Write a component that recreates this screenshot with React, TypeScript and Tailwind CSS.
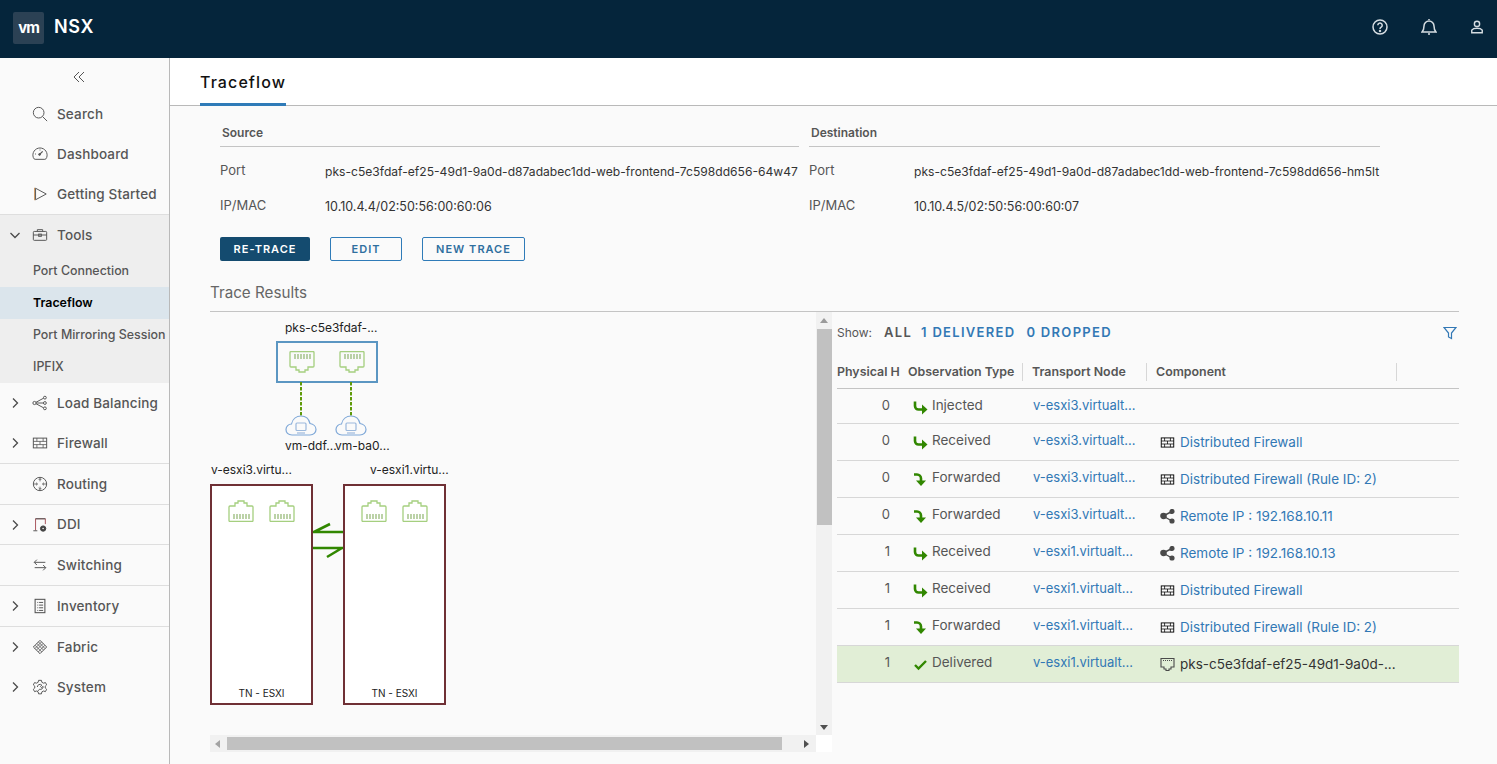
import { ReactNode } from 'react';

const FONT = "font-['Inter','Noto_Sans',sans-serif]";

// ---- icons ----
function Svg({ size = 16, children, className = '' }: { size?: number; children: ReactNode; className?: string }) {
  return (
    <svg width={size} height={size} viewBox="0 0 18 18" fill="none" stroke="currentColor" strokeWidth="1.1" className={className}>
      {children}
    </svg>
  );
}

const SearchIcon = () => (
  <Svg>
    <circle cx="7.5" cy="7.5" r="6" stroke="#565656" />
    <path d="M12 12l5 5" stroke="#565656" />
  </Svg>
);
const DashboardIcon = () => (
  <Svg>
    <path d="M3.5 15h11a2.5 2.5 0 0 0 2-2 8 8 0 1 0-15 0 2.500 2.500 0 0 0 2 2z" />
    <path d="M8 10l4-4" strokeWidth="1.4" />
    <circle cx="8.5" cy="9.500" r="1" fill="currentColor" />
    <path d="M3.5 9h1M9 4v1" />
  </Svg>
);
const PlayIcon = () => (
  <Svg>
    <path d="M3 2v14" stroke="#c98a4a" />
    <path d="M4 2.5L16 9 4 15.5z" />
  </Svg>
);
const ToolsIcon = () => (
  <Svg>
    <rect x="1.5" y="5" width="15" height="10" rx="1" />
    <path d="M6 5V3h6v2M1.5 9h15" />
    <rect x="7.5" y="8" width="3" height="2.5" />
  </Svg>
);
const LoadIcon = () => (
  <Svg>
    <circle cx="2.8" cy="9" r="1.8" />
    <circle cx="14.5" cy="3" r="1.6" />
    <circle cx="14.5" cy="9" r="1.6" />
    <circle cx="14.5" cy="15" r="1.6" />
    <path d="M4.5 8.2L13 3.6M4.6 9H13M4.5 9.8l8.5 4.6" />
  </Svg>
);
const FirewallIcon = ({ size = 16 }: { size?: number }) => (
  <Svg size={size}>
    <rect x="1.5" y="3.500" width="15" height="11" strokeWidth="1.1" />
    <path d="M1.5 7.2h15M1.5 10.8h15M5.5 3.5v3.7M12.5 3.5v3.7M9 7.2v3.6M5.5 10.8v3.7M12.5 10.8v3.7" strokeWidth="0.9" />
  </Svg>
);
const RoutingIcon = () => (
  <Svg>
    <circle cx="9" cy="9" r="7.5" />
    <path d="M2 9h4M12 9h4M9 2v4M9 12v4M4.5 7.5L6.2 9l-1.7 1.5M13.5 7.5L11.8 9l1.7 1.5M7.5 4.5L9 3l1.5 1.5M7.5 13.5L9 15l1.5-1.5" strokeWidth="0.9" />
  </Svg>
);
const DdiIcon = () => (
  <Svg>
    <path d="M4 15V2h11v6" stroke="#a8545c" />
    <path d="M4 2h11M1.5 15.5H6" />
    <circle cx="12.5" cy="13" r="3" fill="#444" stroke="#444" />
    <circle cx="12.5" cy="13" r="0.9" fill="#fafafa" stroke="none" />
  </Svg>
);
const SwitchIcon = () => (
  <Svg>
    <path d="M15 6H2.5M5.5 3L2.5 6l3 3M3 12h12.5M12.5 9l3 3-3 3" />
  </Svg>
);
const InventoryIcon = () => (
  <Svg>
    <rect x="3.5" y="1.5" width="11" height="15" strokeWidth="1.2" />
    <path d="M6 5h1M8 5h4.500M6 8h1M8 8h4.500M6 11h1M8 11h4.500M6 14h1M8 14h4.500" />
  </Svg>
);
const FabricIcon = () => (
  <Svg>
    <path d="M9 1.5L16.5 9 9 16.5 1.5 9z" />
    <path d="M5.5 5L13 12.5M7.2 3.2l7.5 7.6M3.4 7l7.6 7.6M12.5 5L5 12.5M10.8 3.2L3.2 10.8M14.6 7L7 14.6" strokeWidth="0.9" />
  </Svg>
);
const SystemIcon = () => (
  <Svg>
    <path d="M7.4 1.5h3.2l.5 2.2 1.9 1 2.1-.7 1.4 2.6-1.6 1.5v2l1.6 1.5-1.4 2.6-2.1-.7-1.9 1-.5 2.2H7.4l-.5-2.2-1.9-1-2.1.7-1.4-2.6 1.6-1.5v-2L1.500 6.6l1.400-2.6 2.100.7 1.900-1z" />
    <path d="M6 9a3 3 0 0 1 5-2.2L9.5 8.5l1.2 1.2 1.8-1.400a3 3 0 0 1-4 3.200L6.500 13.500" />
  </Svg>
);
const Chevron = ({ down = false }: { down?: boolean }) => (
  <svg width="12" height="12" viewBox="0 0 12 12" fill="none" stroke="#4a4a4a" strokeWidth="1.3">
    {down ? <path d="M1.5 4l4.5 4.5L10.5 4" /> : <path d="M4 1.5L8.5 6 4 10.5" />}
  </svg>
);

// rj45 port, drawn pointing up or down
function Port({ flip = false }: { flip?: boolean }) {
  return (
    <svg width="26" height="22" viewBox="0 0 26 22" fill="none" stroke="#a5cf7f" strokeWidth="1.3" style={flip ? { transform: 'scaleY(-1)' } : undefined}>
      <path d="M1 1.5a1 1 0 0 1 1-1h22a1 1 0 0 1 1 1V15a1 1 0 0 1-1 1h-5v3h-3v2h-6v-2H7v-3H2a1 1 0 0 1-1-1z" />
      <path d="M6 3v5M9 3v5M12 3v5M15 3v5M18 3v5M21 3v5" stroke="#8fb56e" strokeWidth="1.2" />
    </svg>
  );
}

const Cloud = () => (
  <svg width="32" height="21" viewBox="0 0 32 21" fill="none" stroke="#7fa8d8" strokeWidth="1.2">
    <path d="M7 20C3 20 1 17.5 1 14.500C1 11.500 3.500 9 6.500 9C7.500 4 11.500 1 16 1C20.500 1 24 4 25 8.500C28.500 9 31 11.500 31 14.500C31 17.500 28.500 20 25 20Z" fill="#fafafa" />
    <rect x="11" y="8" width="10" height="7.500" rx="1" stroke="#9bb8dc" />
    <path d="M12 18h8" stroke="#9bb8dc" />
  </svg>
);

const Bounce = ({ kind }: { kind: 'in' | 'fw' }) => (
  <svg width="15" height="15" viewBox="0 0 15 15" fill="#318700" stroke="none">
    {kind === 'in' ? (
      <>
        <path d="M2 1.500v4.500a3.500 3.500 0 0 0 3.500 3.500h5" fill="none" stroke="#318700" strokeWidth="2.6" />
        <path d="M9 4.500l5.500 5-5.500 5z" />
      </>
    ) : (
      <>
        <path d="M1 2.500h3a4 4 0 0 1 4 4v4" fill="none" stroke="#318700" strokeWidth="2.6" />
        <path d="M3 8.500h10l-5 5.500z" />
      </>
    )}
  </svg>
);
const Check = () => (
  <svg width="15" height="15" viewBox="0 0 15 15" fill="none" stroke="#318700" strokeWidth="2.4">
    <path d="M2 8l3.5 3.5L13 4" />
  </svg>
);
const ShareIcon = () => (
  <svg width="15" height="15" viewBox="0 0 15 15" fill="#4a4a4a" stroke="#4a4a4a" strokeWidth="1.4">
    <circle cx="3.500" cy="7" r="2.600" />
    <circle cx="12" cy="2.500" r="1.900" />
    <circle cx="12" cy="12" r="1.900" />
    <path d="M3 7l9-4.500M3 7l9 5" />
  </svg>
);
const PortSmall = () => (
  <svg width="15" height="15" viewBox="0 0 15 15" fill="none" stroke="#4a4a4a" strokeWidth="1.1">
    <path d="M1 1.500h13v8.500h-3v2H9v1.500H6V12H4v-2H1z" />
    <path d="M3 3.500h9" strokeDasharray="1 1" />
  </svg>
);

// ---- sidebar ----
type NavItem = { label: string; icon: ReactNode; chevron?: boolean; divider?: boolean; short?: boolean };

const topNav: NavItem[] = [
  { label: 'Search', icon: <SearchIcon /> },
  { label: 'Dashboard', icon: <DashboardIcon /> },
  { label: 'Getting Started', icon: <PlayIcon />, divider: true },
];
const bottomNav: NavItem[] = [
  { label: 'Load Balancing', icon: <LoadIcon />, chevron: true },
  { label: 'Firewall', icon: <FirewallIcon />, chevron: true, divider: true },
  { label: 'Routing', icon: <RoutingIcon />, divider: true },
  { label: 'DDI', icon: <DdiIcon />, chevron: true, divider: true, short: true },
  { label: 'Switching', icon: <SwitchIcon />, divider: true },
  { label: 'Inventory', icon: <InventoryIcon />, chevron: true, divider: true },
  { label: 'Fabric', icon: <FabricIcon />, chevron: true },
  { label: 'System', icon: <SystemIcon />, chevron: true },
];

function NavRow({ item }: { item: NavItem }) {
  const height = item.short ? 'h-10' : item.divider ? 'h-[41px]' : 'h-10';
  return (
    <div className={`flex ${height} items-center ${item.divider ? 'border-b border-[#dedede]' : ''} text-[13.5px] font-medium tracking-[0.15px] text-[#565656]`}>
      <span className="flex w-[32px] justify-end pr-[3px]">
        {item.chevron && <span className="mr-[8px]"><Chevron /></span>}
      </span>
      <span className="flex w-[25px] text-[#565656]">{item.icon}</span>
      <span>{item.label}</span>
    </div>
  );
}

function Sidebar() {
  return (
    <aside className="w-[170px] shrink-0 border-r border-[#b9b9b9] bg-[#fafafa]">
      <div className="flex h-9 items-center justify-center pr-[12px] pt-[2px]">
        <svg width="12" height="12" viewBox="0 0 12 12" fill="none" stroke="#565656" strokeWidth="1">
          <path d="M6 1L1 6l5 5M11 1L6 6l5 5" />
        </svg>
      </div>
      {topNav.map((i) => <NavRow key={i.label} item={i} />)}
      <div className="bg-[#eeeeee] text-[12.4px] font-medium text-[#565656]">
        <div className="flex h-10 items-center text-[13.5px] tracking-[0.15px]">
          <span className="flex w-[32px] justify-start pl-[9px]"><Chevron down /></span>
          <span className="flex w-[25px]"><ToolsIcon /></span>
          <span>Tools</span>
        </div>
        <div className="flex h-8 items-center pl-[33px]">Port Connection</div>
        <div className="flex h-8 items-center bg-[#dbe5ec] pl-[33px] font-semibold text-black">Traceflow</div>
        <div className="flex h-8 items-center whitespace-nowrap pl-[33px]">Port Mirroring Session</div>
        <div className="flex h-8 items-center pl-[33px]">IPFIX</div>
      </div>
      {bottomNav.map((i) => <NavRow key={i.label} item={i} />)}
    </aside>
  );
}

// ---- source / destination ----
function Endpoint({ title, port, ip, className }: { title: string; port: string; ip: string; className: string }) {
  return (
    <div className={className}>
      <div className="flex h-[29px] items-center border-b border-[#c4c4c4] pl-[2px] pt-[1px] text-[12px] font-semibold text-[#565656]">{title}</div>
      <div className="mt-[15px] flex h-[20px] items-center text-[13px] text-[#565656]">
        <span className="-mt-[2px] w-[105px] shrink-0">Port</span>
        <span className="whitespace-nowrap text-[12.1px] text-[#333]">{port}</span>
      </div>
      <div className="mt-[15px] flex h-[20px] items-center text-[13px] text-[#565656]">
        <span className="-mt-[2px] w-[105px] shrink-0">IP/MAC</span>
        <span className="whitespace-nowrap text-[12.5px] text-[#333]">{ip}</span>
      </div>
    </div>
  );
}

// ---- topology canvas ----
function Topology() {
  return (
    <div className="relative h-[423px] flex-1 overflow-hidden text-[12px] text-[#222]">
      <span className="absolute left-[75px] top-[7px]">pks-c5e3fdaf-...</span>
      <div className="absolute left-[66px] top-[29px] flex h-[42px] w-[102px] items-center justify-between border-2 border-[#5b96c2] bg-[#fafafa] px-[11px]">
        <Port />
        <Port />
      </div>
      <svg className="absolute left-[66px] top-[70px]" width="102" height="34" fill="none" stroke="#5f9a0a" strokeWidth="2" strokeDasharray="3.5 1.5">
        <path d="M25 0v34M75 0v34" />
      </svg>
      <span className="absolute left-[75px] top-[103px]"><Cloud /></span>
      <span className="absolute left-[125px] top-[103px]"><Cloud /></span>
      <span className="absolute left-[75px] top-[125px]">vm-ddf...</span>
      <span className="absolute left-[125px] top-[125px]">vm-ba0...</span>

      <span className="absolute left-[1px] top-[149px]">v-esxi3.virtu...</span>
      <span className="absolute left-[160px] top-[149px]">v-esxi1.virtu...</span>
      <div className="absolute left-0 top-[172px] h-[221px] w-[103px] border-2 border-[#6f3035] bg-white">
        <div className="flex justify-between px-[16px] pt-[14px]"><Port flip /><Port flip /></div>
        <span className="absolute bottom-[2px] left-0 w-full text-center text-[10px]">TN - ESXI</span>
      </div>
      <div className="absolute left-[133px] top-[172px] h-[221px] w-[103px] border-2 border-[#6f3035] bg-white">
        <div className="flex justify-between px-[16px] pt-[14px]"><Port flip /><Port flip /></div>
        <span className="absolute bottom-[2px] left-0 w-full text-center text-[10px]">TN - ESXI</span>
      </div>
      <svg className="absolute left-[103px] top-[207px]" width="30" height="40" fill="none" stroke="#318700" strokeWidth="2.6">
        <path d="M0 13h30M1 13l16-8" />
        <path d="M0 29h30M29 29L14 38" />
      </svg>
    </div>
  );
}

function VerticalBar() {
  return (
    <div className="flex h-[423px] w-[16px] shrink-0 flex-col items-center justify-between bg-[#f1f1f1]">
      <div className="flex h-[17px] items-center"><span className="h-0 w-0 border-x-[4px] border-b-[5px] border-x-transparent border-b-[#9a9a9a]" /></div>
      <div className="mb-auto h-[196px] w-[15px] bg-[#c1c1c1]" />
      <div className="flex h-[16px] items-center"><span className="h-0 w-0 border-x-[4px] border-t-[5px] border-x-transparent border-t-[#505050]" /></div>
    </div>
  );
}

function HorizontalBar() {
  return (
    <div className="flex h-[17px]">
      <div className="flex h-full w-[606px] items-center bg-[#f1f1f1]">
        <span className="ml-[5px] h-0 w-0 border-y-[4px] border-r-[5px] border-y-transparent border-r-[#a3a3a3]" />
        <div className="ml-[7px] h-[13px] w-[555px] bg-[#c1c1c1]" />
        <span className="ml-[22px] h-0 w-0 border-y-[4px] border-l-[5px] border-y-transparent border-l-[#505050]" />
      </div>
      <div className="w-[16px] bg-white" />
    </div>
  );
}

// ---- results table ----
type Row = { hop: number; obs: string; kind: 'in' | 'fw' | 'ok'; node: string; comp?: string; icon?: 'fw' | 'share' | 'port'; first?: boolean };

const rows: Row[] = [
  { hop: 0, obs: 'Injected', kind: 'in', node: 'v-esxi3.virtualt...', first: true },
  { hop: 0, obs: 'Received', kind: 'in', node: 'v-esxi3.virtualt...', comp: 'Distributed Firewall', icon: 'fw' },
  { hop: 0, obs: 'Forwarded', kind: 'fw', node: 'v-esxi3.virtualt...', comp: 'Distributed Firewall (Rule ID: 2)', icon: 'fw' },
  { hop: 0, obs: 'Forwarded', kind: 'fw', node: 'v-esxi3.virtualt...', comp: 'Remote IP : 192.168.10.11', icon: 'share' },
  { hop: 1, obs: 'Received', kind: 'in', node: 'v-esxi1.virtualt...', comp: 'Remote IP : 192.168.10.13', icon: 'share' },
  { hop: 1, obs: 'Received', kind: 'in', node: 'v-esxi1.virtualt...', comp: 'Distributed Firewall', icon: 'fw' },
  { hop: 1, obs: 'Forwarded', kind: 'fw', node: 'v-esxi1.virtualt...', comp: 'Distributed Firewall (Rule ID: 2)', icon: 'fw' },
  { hop: 1, obs: 'Delivered', kind: 'ok', node: 'v-esxi1.virtualt...', comp: 'pks-c5e3fdaf-ef25-49d1-9a0d-...', icon: 'port' },
];

const cols = 'grid grid-cols-[71px_124px_124px_1fr]';

function ResultRow({ row }: { row: Row }) {
  const ok = row.kind === 'ok';
  return (
    <div className={`${cols} ${row.first ? 'h-[35px]' : 'h-[37px]'} items-start border-b border-[#d7d7d7] pt-[7px] text-[13px] ${ok ? 'bg-[#e1eed6]' : ''}`}>
      <span className="pr-[18px] text-right text-[#565656]">{row.hop}</span>
      <span className="-mt-[1px] flex items-center gap-[4px] pl-[5px] text-[13.5px] text-[#565656]">
        <span className="translate-y-[2px]">{ok ? <Check /> : <Bounce kind={row.kind as 'in' | 'fw'} />}</span>
        {row.obs}
      </span>
      <span className="pl-[1px] text-[#3278b5]">{row.node}</span>
      <span className="flex items-center gap-[5px] pl-[4px] pt-[1px] text-[13.5px]">
        {row.icon === 'fw' && <FirewallIcon size={15} />}
        {row.icon === 'share' && <ShareIcon />}
        {row.icon === 'port' && <PortSmall />}
        <span className={ok ? 'text-[#333]' : 'text-[#3278b5]'}>{row.comp}</span>
      </span>
    </div>
  );
}

function ResultsTable() {
  return (
    <div className="ml-[5px] w-[622px]">
      <div className="flex h-[40px] items-center pt-[1px]">
        <span className="w-[47px] text-[12px] text-[#565656]">Show:</span>
        <span className="text-[13px] font-semibold tracking-[1.3px] text-[#565656]">ALL</span>
        <span className="ml-[9px] text-[13px] font-semibold tracking-[1.3px] text-[#3278b5]">1 DELIVERED</span>
        <span className="ml-[11px] text-[13px] font-semibold tracking-[1.3px] text-[#3278b5]">0 DROPPED</span>
        <svg className="ml-auto mr-[2px]" width="14" height="14" viewBox="0 0 14 14" fill="none" stroke="#3278b5" strokeWidth="1.2">
          <path d="M1 1.5h12L8.5 7v5.5L5.500 11V7z" />
        </svg>
      </div>
      <div className={`${cols} h-[37px] items-center border-b border-[#c4c4c4] pt-[4px] text-[12.4px] font-semibold text-[#565656]`}>
        <span className="overflow-hidden whitespace-nowrap">Physical H</span>
        <span className="mr-[9px] border-r border-[#d7d7d7]">Observation Type</span>
        <span className="mr-[9px] border-r border-[#d7d7d7]">Transport Node</span>
        <span className="mr-[62px] border-r border-[#d7d7d7]">Component</span>
      </div>
      {rows.map((r, i) => <ResultRow key={i} row={r} />)}
    </div>
  );
}

export default function App() {
  return (
    <div className={`${FONT} flex h-[764px] w-[1497px] flex-col overflow-hidden bg-[#fafafa]`}>
      <header className="flex h-[58px] shrink-0 items-center bg-[#05253b] pl-[13px]">
        <div className="mb-[2px] flex h-[32px] w-[31px] items-center justify-center rounded-[2px] bg-[#2b4154] text-[15px] font-bold tracking-[-1px] text-white">vm</div>
        <span className="mb-[6px] ml-[10px] text-[18px] font-semibold tracking-[0.7px] text-white">NSX</span>
        <div className="mb-[4px] ml-auto flex items-center gap-[33px] pr-[13px] text-[#d6dde2]">
          <svg width="16" height="16" viewBox="0 0 16 16" fill="none" stroke="currentColor" strokeWidth="1.5">
            <circle cx="8" cy="8" r="7" />
            <path d="M5.8 6.2a2.2 2.2 0 1 1 3.4 1.9c-.8.5-1.2.9-1.2 1.8" />
            <circle cx="8" cy="12" r="0.5" fill="currentColor" />
          </svg>
          <svg width="16" height="16" viewBox="0 0 16 16" fill="none" stroke="currentColor" strokeWidth="1.5">
            <path d="M1 13c1.5-1.5 2-2 2-6a5 5 0 0 1 10 0c0 4 .5 4.5 2 6z" />
            <path d="M7 15h2M8 1V0" />
          </svg>
          <svg width="14" height="16" viewBox="0 0 16 16" fill="none" stroke="currentColor" strokeWidth="1.6">
            <circle cx="8" cy="4.500" r="3" />
            <path d="M2 14.500v-3c1-1.300 3-2 6-2s5 .7 6 2v3z" />
          </svg>
        </div>
      </header>
      <div className="flex min-h-0 flex-1">
        <Sidebar />
        <main className="min-w-0 flex-1">
          <div className="flex h-[48px] border-b border-[#b9b9b9] bg-white pl-[30px]">
            <div className="flex h-[48px] items-center border-b-[3px] border-[#2f7bb8] pt-[2px] text-[16px] font-medium tracking-[1.1px] text-[#111]">Traceflow</div>
          </div>
          <div className="flex pl-[50px] pt-[12px]">
            <Endpoint className="w-[579px]" title="Source" port="pks-c5e3fdaf-ef25-49d1-9a0d-d87adabec1dd-web-frontend-7c598dd656-64w47" ip="10.10.4.4/02:50:56:00:60:06" />
            <Endpoint className="ml-[10px] w-[571px]" title="Destination" port="pks-c5e3fdaf-ef25-49d1-9a0d-d87adabec1dd-web-frontend-7c598dd656-hm5lt" ip="10.10.4.5/02:50:56:00:60:07" />
          </div>
          <div className="mt-[20px] flex gap-[20px] pl-[50px] text-[11px] font-semibold tracking-[1px]">
            <button className="h-[24px] w-[90px] rounded-[2px] bg-[#144b6f] text-white">RE-TRACE</button>
            <button className="h-[24px] w-[72px] rounded-[2px] border border-[#2f7bb8] text-[#2f6f9f]">EDIT</button>
            <button className="h-[24px] w-[103px] rounded-[2px] border border-[#2f7bb8] text-[#2f6f9f]">NEW TRACE</button>
          </div>
          <div className="ml-[40px] mt-[21px] w-[1249px]">
            <div className="h-[30px] border-b border-[#c4c4c4] text-[15.2px] leading-[22px] text-[#666]">Trace Results</div>
            <div className="flex items-start">
              <div className="w-[622px]">
                <div className="flex">
                  <Topology />
                  <VerticalBar />
                </div>
                <HorizontalBar />
              </div>
              <ResultsTable />
            </div>
          </div>
        </main>
      </div>
    </div>
  );
}
